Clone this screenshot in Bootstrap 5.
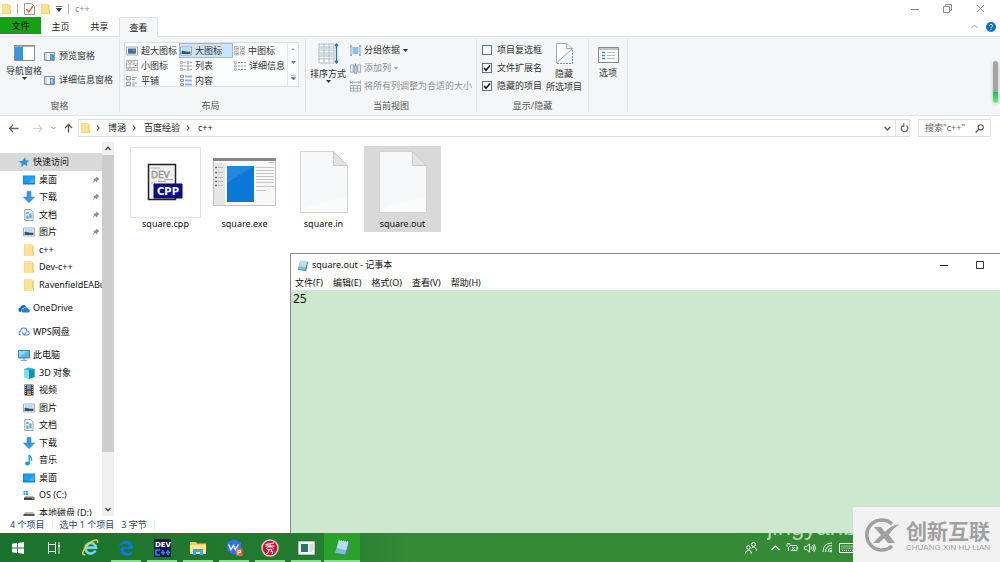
<!DOCTYPE html>
<html lang="zh-CN">
<head>
<meta charset="utf-8">
<meta name="viewport" content="width=device-width, initial-scale=1">
<title>c++</title>
<link href="https://cdn.jsdelivr.net/npm/bootstrap@5.3.0/dist/css/bootstrap.min.css" rel="stylesheet">
<style>
body{font:9px/12px "Noto Sans","Noto Sans CJK SC",sans-serif;color:#222;background:#fff;height:100vh;overflow:hidden}
body>*{flex-shrink:0}
svg{display:block;flex:none}
button{font:inherit;color:inherit;background:none;border:0;padding:0;white-space:nowrap}
a{color:inherit;text-decoration:none}
input,textarea{font:inherit;border-radius:0}
main{flex:1 1 0;min-height:0}
.bar-title{height:17px;padding-left:2px;gap:6px;color:#8a8a8a}
.win-btn{width:33px;height:16px;display:flex;align-items:center;justify-content:center}
.bar-title .win-set{margin-right:3px}
.sep{width:1px;height:10px;background:#aaa}
.tabs{height:20px;border-bottom:1px solid #dfe1e3}
.tab{height:20px;width:39px}
.tab-file{background:#16a016;width:41px;height:17px;color:#000}
.tab-on{background:#f5f6f7;border:1px solid #dfe1e3;border-bottom:0}
.ribbon{background:#f5f6f7;height:79px;border-bottom:1px solid #dfe1e3;color:#333}
.grp{border-right:1px solid #e2e4e6;margin:2px 0;height:73px}
.grp-body{height:61px}
.grp-name{text-align:center;color:#555}
.g1{width:120px}.g2{width:186px;padding-left:4px}.g3{width:171px}.g4{width:112px}.g5{width:39px}
.g2 .grp-body{padding-top:3px}
.g2 .grp-name{padding-right:8px}
.big{display:flex;flex-direction:column;align-items:center;line-height:13px}
.big svg{margin-bottom:3px}
.big .tri{margin:0}
.g1 .big{margin-left:6px;padding-top:6px}
.panes{padding:8px 0 0 2px;gap:6px}
.panes button{height:18px}
.gallery{width:175px;height:45px;border:1px solid #dcdfe3;background:#fbfcfe}
.gal-grid{display:grid;grid-template-columns:repeat(3,54px);grid-auto-rows:15px;flex:1;overflow:hidden}
.gal-grid button{display:flex;align-items:center;gap:3px;padding-left:1px}
.gal-grid button.picked{background:#cce4fb;box-shadow:inset 0 0 0 1px #8dbdec}
.gal-bar{width:11px;border-left:1px solid #e4e6e9}
.rows{display:flex;flex-direction:column;padding-top:2px}
.rows>*{height:18px;display:flex;align-items:center;gap:3px}
.ticks{padding-left:5px;white-space:nowrap}
.ticks>label{gap:5px}
.dim{color:#8e9196}
.tick{appearance:none;width:10px;height:10px;border:1px solid #5c6f94;background:#fff;margin:0}
.tick:checked{background:#fff url("data:image/svg+xml,%3Csvg xmlns='http://www.w3.org/2000/svg' viewBox='0 0 8 8'%3E%3Cpath d='M1 4l2 2.3L7 1.4' fill='none' stroke='%23111' stroke-width='1.6'/%3E%3C/svg%3E") center/8px no-repeat}
.address{height:26px;padding:3px 9px 5px 8px}
.nav-set{width:70px}
.box{border:1px solid #dedede;height:18px;background:#fff}
.path-box{padding-left:2px}
.path-box>.home{margin-right:6px}
.path-box a{margin:0 6px 0 8px}
.search{width:73px}
.search input{border:0;width:50px;padding:0;margin-left:6px;color:#666;outline:0}
.search input::placeholder{color:#666;opacity:1}
.tree{width:102px;padding-top:11px;overflow:hidden}
.tree ul{list-style:none;margin:0 0 6px;padding:0}
.tree li{height:18px;display:flex;align-items:center;padding-left:23px;white-space:nowrap;color:#111}
.tree li:nth-child(even),.tree .short li{height:17px}
.tree li a{display:flex;align-items:center;gap:4px}
.tree li.root{padding-left:18px}
.tree li.root a{gap:3px}
.tree li .pin{margin-left:auto;margin-right:2px}
.tree li.here{background:#d9d9d9}
.scroll{width:12px;background:#f0f0f0}
.thumb{height:297px;background:#cdcdcd}
.files{padding:4px 0 0 13px;gap:2px}
.file{width:77px;height:86px;display:flex;flex-direction:column;align-items:center;color:#111}
.file .pic{height:72px;display:flex;align-items:center;justify-content:center}
.file.chosen{background:#d9d9d9}
.status{height:17px;color:#2c4468;padding-left:10px}
.status span+span{margin-left:7px}
.status .sep{background:#e8e8e8}
.notepad{position:absolute;left:290px;right:0;top:253px;bottom:29px;border:1px solid #8a8a8a;border-width:1px 0 0 1px;background:#fff;color:#111}
.np-title{height:22px;padding-left:6px;gap:3px}
.np-menu{height:14px;padding-left:4px;gap:10px}
.notepad textarea{background:#cce8cf;border:0;resize:none;outline:0;padding:1px 2px;font-size:12px;line-height:15px;color:#111}
.taskbar{height:29px;background:linear-gradient(90deg,#1b722c,#237a30 30%,#368a37 42%,#358b35);position:relative;overflow:hidden}
.app{width:36px;height:29px;display:flex;align-items:center;justify-content:center;position:relative}
.app.open::after{content:"";position:absolute;left:3px;right:3px;bottom:0;height:2px;background:#84e08a}
.app.front{background:#28a228}
.app.front::after{left:0;right:0}
.tray{margin-right:147px;gap:6px}
.faint{position:absolute;right:145px;top:-20px;font:24px/28px "Liberation Sans",sans-serif;color:#ffffffa6;width:88px;overflow:hidden;white-space:nowrap}
.stamp{position:absolute;right:0;bottom:0;width:147px;height:55px;background:#f2f2f2;color:#a0a0a0;padding-left:11px;gap:5px}
.stamp b{font:700 21px/26px "Noto Sans CJK SC",sans-serif;display:block}
.stamp small{font:8px/10px "Liberation Sans",sans-serif;display:block;white-space:nowrap}
.gauge{position:absolute;right:2px;top:61px;width:5px;height:42px;border-radius:3px;background:linear-gradient(#a5a5a5 74%,#22bd57 75%,#77ee78);box-shadow:0 1px 4px #0003}
</style>
<script src="https://cdn.jsdelivr.net/npm/bootstrap@5.3.0/dist/js/bootstrap.bundle.min.js"></script>
</head>
<body class="d-flex flex-column">
<svg width="0" height="0" class="position-absolute" aria-hidden="true">
<symbol id="folder" viewBox="0 0 10 12"><path d="M0 .5h7.500l.5 1H9.500V8.500h.5V11.500H0z" fill="#efc55e"/><path d="M.3.8H8.300v8.200H9V11H.3z" fill="#ffe392"/></symbol>
<symbol id="tri" viewBox="0 0 5 3"><path d="M0 0h5L2.500 3z" fill="currentColor"/></symbol>
<symbol id="chev" viewBox="0 0 4 6"><path d="M.8.6L3.200 3 .8 5.400" fill="none" stroke="#555" stroke-width="1.100"/></symbol>
<symbol id="desk" viewBox="0 0 12 10"><path d="M0 .5h12v9H0z" fill="#0c83dc"/><path d="M.7 1.200h10.600v6.500H.7z" fill="#1d9cf3"/><path d="M5 7.700L11.300 2v5.700z" fill="#42b0f8"/></symbol>
<symbol id="down" viewBox="0 0 12 12"><path d="M4 .5h4V6h3.600L6 11.700.4 6H4z" fill="#3a97e8" stroke="#1f7dcc" stroke-width=".5"/></symbol>
<symbol id="doc" viewBox="0 0 12 12"><path d="M1.800.5h6L10 2.800v8.700H1.800z" fill="#f4f9fc" stroke="#7f8c96" stroke-width=".8"/><path d="M3.200 3h2.500v2H3.200zM6.200 4.500h2.500v5H6.200zM3.200 6.500h2.400v3.300H3.200z" fill="#5fb0e2"/></symbol>
<symbol id="photo" viewBox="0 0 12 10"><path d="M.5 1h11v8H.5z" fill="#fff" stroke="#8f989f" stroke-width=".8"/><path d="M1.600 2h8.800v6H1.600z" fill="#b9def5"/><path d="M1.600 5c2-1.300 4 1.700 8.800.5V8H1.600z" fill="#33566b"/></symbol>
<symbol id="pin" viewBox="0 0 8 8"><path d="M4.600.4l3 3-1 .2-1.300 1.500-.2 1.600-1-.9-1-1L.3 7.700 2.200 4 1 2.900l1.800-.2L4.400 1.400z" fill="#84929e"/></symbol>
<symbol id="minus" viewBox="0 0 8 8"><path d="M0 4.500h8" stroke="currentColor"/></symbol>
<symbol id="sheet" viewBox="0 0 48 62"><path d="M.5.500h33l14 14v47H.5z" fill="#f7f8f9" stroke="#d2d3d5"/><path d="M33.500.500v14h14z" fill="#e2e2e2" stroke="#c9c9c9"/><path d="M1 58L47 45v16H1z" fill="#fafbfb"/></symbol>
<symbol id="pad" viewBox="0 0 16 16"><path d="M4.500 1.500L15 3l-3 12.500L1 13.500z" fill="#4b8499"/><path d="M4.500 1.500L13.500 3 10.500 14.500 1 13z" fill="#7dbdd2"/><path d="M4.500 1.500L13.500 3 11.500 10.500 2.500 8.500z" fill="#b3e0ec"/><path d="M4.500 1.200l9.500 1.500" stroke="#f2f8f9" stroke-dasharray="1 1"/></symbol>
</svg>

<header class="bar-title d-flex align-items-center">
<svg width="9" height="12"><use href="#folder"/></svg><span class="sep"></span>
<svg width="11" height="12" viewBox="0 0 11 12"><path d="M.5.500h7l3 3v8H.5z" fill="#fafafa" stroke="#999"/><path d="M2.500 6l2.300 3L9 3" fill="none" stroke="#e56f38" stroke-width="1.500"/></svg>
<svg width="9" height="12"><use href="#folder"/></svg>
<svg class="text-dark" width="6" height="6" viewBox="0 0 6 6"><path d="M0 .5h6M.5 2.500h5L3 5.500z" fill="currentColor" stroke="currentColor" stroke-width=".7"/></svg>
<span class="sep"></span><span>c++</span>
<div class="win-set ms-auto d-flex">
<button class="win-btn" aria-label="最小化"><svg width="8" height="8"><use href="#minus"/></svg></button>
<button class="win-btn" aria-label="还原"><svg width="9" height="9" viewBox="0 0 9 9" fill="none" stroke="currentColor"><path d="M.5 2.500h6v6h-6zM2.500 2.500v-2h6v6h-2"/></svg></button>
<button class="win-btn" aria-label="关闭"><svg width="9" height="9" viewBox="0 0 9 9" stroke="currentColor"><path d="M1 1l7 7M8 1L1 8"/></svg></button>
</div>
</header>

<nav class="tabs d-flex">
<button class="tab tab-file">文件</button><button class="tab">主页</button><button class="tab">共享</button><button class="tab tab-on">查看</button>
<div class="ms-auto d-flex align-items-center gap-2 pe-1"><svg width="7" height="5" viewBox="0 0 7 5"><path d="M.5 4l3-3 3 3" fill="none" stroke="#999"/></svg>
<button aria-label="帮助"><svg width="10" height="10" viewBox="0 0 10 10"><circle cx="5" cy="5" r="5" fill="#0b70cc"/><path d="M3.400 3.700C3.500 1.800 6.600 1.900 6.600 3.700 6.600 4.700 5 4.800 5 6.200M5 7.200v1.100" stroke="#fff" fill="none"/></svg></button></div>
</nav>

<section class="ribbon d-flex">
<div class="grp g1"><div class="grp-body d-flex">
<button class="big align-self-start"><svg width="21" height="16" viewBox="0 0 21 16"><path d="M.5.500h20v15H.5z" fill="#fff" stroke="#8b8f93"/><path d="M1 2h8v13H1z" fill="#3597e3"/><path d="M1 1h19v1H1z" fill="#a8acb0"/></svg>导航窗格<svg class="tri" width="5" height="3"><use href="#tri"/></svg></button>
<div class="panes d-flex flex-column">
<button class="d-flex align-items-center"><svg class="me-1" width="11" height="9" viewBox="0 0 11 9"><path d="M.5.500h10v8H.5z" fill="#fff" stroke="#8b8f93"/><path d="M6 2h4v6H6z" fill="#3fa2ea"/><path d="M2 1v7" stroke="#aaa"/></svg>预览窗格</button>
<button class="d-flex align-items-center"><svg class="me-1" width="11" height="9" viewBox="0 0 11 9"><path d="M.5.500h10v8H.5z" fill="#fff" stroke="#8b8f93"/><path d="M6 2h4v6H6z" fill="#3fa2ea"/><path d="M7 4h2M7 6h2" stroke="#fff"/><path d="M2 1v7" stroke="#aaa"/></svg>详细信息窗格</button>
</div></div><div class="grp-name">窗格</div></div>

<div class="grp g2"><div class="grp-body"><div class="gallery d-flex"><div class="gal-grid">
<button><svg width="12" height="10" viewBox="0 0 12 10"><path d="M.5 1h11v8H.5z" fill="#fff" stroke="#8f989f" stroke-width=".8"/><path d="M2 2.500h8V7.500H2z" fill="#3a6fd0"/><path d="M2 7.500l3-2.500 5 2.500z" fill="#2c8a4a"/><path d="M6.500 3.500h2.500v2H6.500z" fill="#e0524a"/></svg>超大图标</button>
<button class="picked"><svg width="12" height="10"><use href="#photo"/></svg>大图标</button>
<button><svg width="11" height="10" viewBox="0 0 11 10" fill="#fff" stroke="#999" stroke-width=".6"><path d="M.5.500h4v3.500h-4zM6.500.500h4v3.500h-4zM.5 5.500h4V9h-4zM6.500 5.500h4V9h-4z"/><path d="M2 2h1.500v1H2z" stroke="#d44"/><path d="M8 2h1.500v1H8zM2 7h1.500v1H2z" stroke="#276"/><path d="M8 7h1.500v1H8z" stroke="#d44"/></svg>中图标</button>
<button><svg width="12" height="11" viewBox="0 0 12 11"><path d="M.5.500h11v10H.5zM4 .5v10M8 .5v10M.5 4h11M.5 7.500h11" fill="#fff" stroke="#999" stroke-width=".7"/><path d="M1.500 2h1.500M9 5.500h1.500M5 9h1.500" stroke="#d53"/><path d="M5 2h1.500M1.500 9H3" stroke="#38c"/></svg>小图标</button>
<button><svg width="12" height="10" viewBox="0 0 12 10"><path d="M.5.500h2v2h-2zM.5 4h2v2h-2zM.5 7.500h2v2h-2zM7 .5h2v2H7zM7 4h2v2H7zM7 7.500h2v2H7z" fill="#fff" stroke="#999" stroke-width=".7"/><path d="M3.500 1.500h2M3.500 5h2M3.500 8.500h2M10 1.500h2M10 5h2M10 8.500h2" stroke="#999"/></svg>列表</button>
<button><svg width="12" height="10" viewBox="0 0 12 10"><path d="M.5.500h2v2h-2zM.5 4h2v2h-2zM.5 7.500h2v2h-2z" fill="#fff" stroke="#999" stroke-width=".7"/><path d="M4 1.500h8M4 5h8M4 8.500h8" stroke="#999" stroke-dasharray="2 1"/></svg>详细信息</button>
<button><svg width="12" height="10" viewBox="0 0 12 10"><path d="M.5.500h4v3.500h-4zM.5 6h4v3.500h-4z" fill="#cbe9d7" stroke="#888" stroke-width=".8"/><path d="M6 1.500h5M6 3.500h3M6 7h5M6 9h3" stroke="#999"/></svg>平铺</button>
<button><svg width="12" height="11" viewBox="0 0 12 11"><path d="M.5.500h3v2h-3zM.5 4.500h3v2h-3zM.5 8.500h3v2h-3z" fill="#fff" stroke="#777" stroke-width=".8"/><path d="M5 1.500h7M5 5.500h7M5 9.500h7" stroke="#8ab7e8" stroke-width="2"/></svg>内容</button>
</div><div class="gal-bar d-flex flex-column justify-content-around align-items-center text-secondary"><svg width="4" height="2" viewBox="0 0 4 2"><path d="M0 2l2-2 2 2z" fill="#aaa"/></svg><svg width="5" height="3"><use href="#tri"/></svg><svg width="5" height="6" viewBox="0 0 5 6"><path d="M0 .5h5M0 2.500h5L2.500 5z" fill="currentColor" stroke="currentColor" stroke-width=".5"/></svg></div></div></div><div class="grp-name">布局</div></div>

<div class="grp g3"><div class="grp-body d-flex">
<button class="big ms-1 pt-1 align-self-start"><svg width="21" height="21" viewBox="0 0 21 21"><path d="M1 1h15v19H1zM1 4h15M1 7h15M1 10h15M1 13h15M1 16h15M6 1v19M11 1v19" fill="#fff" stroke="#b3bac1"/><path d="M2 5.500h13M2 11.500h13" stroke="#c3dff3"/><path d="M18.500 1v19M17 3l1.500-2L20 3M17 18l1.500 2L20 18" stroke="#1979c3" fill="none" stroke-width="1.300"/></svg>排序方式<svg class="tri" width="5" height="3"><use href="#tri"/></svg></button>
<div class="rows ms-1">
<button><svg width="11" height="11" viewBox="0 0 11 11"><path d="M1 0v11M10 0v11M0 1h2M0 10h2M9 1h2M9 10h2" stroke="#8e989f"/><path d="M2.500 2h6v7h-6z" fill="#82c5f3"/></svg>分组依据<svg width="5" height="3"><use href="#tri"/></svg></button>
<button class="dim"><svg width="11" height="11" viewBox="0 0 12 11"><path d="M.5 1.500h3v8h-3zM8.500 1.500h3v8h-3z" fill="#eef1f5" stroke="#9da9b8"/><path d="M4.500 3h3v7.500h-3zM6 0v3" fill="#cbd5e3" stroke="#8191ab"/></svg>添加列<svg width="4" height="3"><use href="#tri"/></svg></button>
<button class="dim"><svg width="11" height="12" viewBox="0 0 12 12"><path d="M.5 0v4M11.500 0v4M1 2h10M3 .6L1.500 2 3 3.400M9 .6L10.500 2 9 3.400M.5 5.500h11v6H.5zM4 5.500v6M8 5.500v6M.5 8.500h11" fill="none" stroke="#98a4b3"/></svg>将所有列调整为合适的大小</button>
</div></div><div class="grp-name">当前视图</div></div>

<div class="grp g4"><div class="grp-body d-flex">
<div class="rows ticks">
<label><input class="tick" type="checkbox">项目复选框</label>
<label><input class="tick" type="checkbox" checked>文件扩展名</label>
<label><input class="tick" type="checkbox" checked>隐藏的项目</label></div>
<button class="big ms-1 pt-1 align-self-start"><svg width="17" height="21" viewBox="0 0 17 21"><path d="M.5 20V.500h10l6 5L.5 20" fill="#fff" stroke="#a3a6aa"/><path d="M10.500.500v5h6" fill="#eee" stroke="#a3a6aa"/><path d="M16.500 7v13.500H1" fill="none" stroke="#4b9ad4" stroke-dasharray="2 1"/></svg>隐藏<br>所选项目</button>
</div><div class="grp-name">显示/隐藏</div></div>
<div class="grp g5"><button class="big w-100 pt-2"><svg width="21" height="16" viewBox="0 0 21 16"><path d="M.5.500h20v15H.5z" fill="#fff" stroke="#85898d"/><path d="M1 1h19v2H1z" fill="#bfc3c7"/><path d="M4 5.500h3M4 8.500h3M4 11.500h3" stroke="#3190dc" stroke-width="1.500"/><path d="M9 5.500h8M9 8.500h8M9 11.500h8" stroke="#b9bec3"/></svg>选项</button></div>
</section>

<section class="address d-flex align-items-center">
<div class="nav-set d-flex align-items-center">
<button aria-label="后退"><svg width="12" height="9" viewBox="0 0 12 9"><path d="M10.500 4.500h-9M5 1L1.500 4.500 5 8" fill="none" stroke="#666" stroke-width="1.300"/></svg></button>
<button class="ms-2 ps-1" aria-label="前进"><svg width="11" height="9" viewBox="0 0 11 9"><path d="M1 4.500h9M6.500 1L10 4.500 6.500 8" fill="none" stroke="#d0d0d0" stroke-width="1.200"/></svg></button>
<button class="ms-2" aria-label="最近"><svg width="5" height="4" viewBox="0 0 5 4"><path d="M.5 1l2 2 2-2" fill="none" stroke="#888"/></svg></button>
<button class="ms-2" aria-label="向上"><svg width="9" height="10" viewBox="0 0 9 10"><path d="M4.500 9.500V1.500M1 5l3.500-3.500L8 5" fill="none" stroke="#555" stroke-width="1.300"/></svg></button></div>
<div class="box path-box flex-grow-1 d-flex align-items-center">
<svg class="home" width="9" height="12"><use href="#folder"/></svg><svg width="4" height="6"><use href="#chev"/></svg><a href="#">博涵</a><svg width="4" height="6"><use href="#chev"/></svg><a href="#">百度经验</a><svg width="4" height="6"><use href="#chev"/></svg><a href="#">c++</a>
<button class="ms-auto me-1" aria-label="展开"><svg width="7" height="5" viewBox="0 0 7 5"><path d="M.7 1l2.800 3L6.300 1" fill="none" stroke="#555" stroke-width="1.300"/></svg></button>
<button class="border-start h-100 ps-1" aria-label="刷新"><svg width="9" height="10" viewBox="0 0 9 10"><path d="M2.700 2.500A3.300 3.300 0 1 0 6.500 2.600M3.800.3v3H.8" fill="none" stroke="#666" stroke-width="1.200"/></svg></button></div>
<div class="box search d-flex align-items-center ms-2"><input type="text" placeholder='搜索"c++"' aria-label="搜索"><svg width="9" height="9" viewBox="0 0 9 9"><circle cx="5.700" cy="3.300" r="2.600" fill="none" stroke="#555" stroke-width="1.100"/><path d="M3.800 5.200L.6 8.400" stroke="#555" stroke-width="1.400"/></svg></div>
</section>

<main class="d-flex overflow-hidden">
<nav class="tree">
<ul>
<li class="root here"><a href="#"><svg width="12" height="11" viewBox="0 0 12 11"><path d="M7 .3l.8 3 3.500.2-2.800 2.200 1 3.800-3.200-1.900L3 10.300l.8-3.600L.5 4.200l3.700-.3z" fill="#2e93dc"/></svg>快速访问</a></li>
<li><a href="#"><svg width="12" height="10"><use href="#desk"/></svg>桌面</a><svg class="pin" width="8" height="8"><use href="#pin"/></svg></li>
<li><a href="#"><svg width="12" height="12"><use href="#down"/></svg>下载</a><svg class="pin" width="8" height="8"><use href="#pin"/></svg></li>
<li><a href="#"><svg width="12" height="12"><use href="#doc"/></svg>文档</a><svg class="pin" width="8" height="8"><use href="#pin"/></svg></li>
<li><a href="#"><svg width="12" height="10"><use href="#photo"/></svg>图片</a><svg class="pin" width="8" height="8"><use href="#pin"/></svg></li>
<li><a href="#"><svg width="12" height="12"><use href="#folder"/></svg>c++</a></li>
<li><a href="#"><svg width="12" height="12"><use href="#folder"/></svg>Dev-c++</a></li>
<li><a href="#"><svg width="12" height="12"><use href="#folder"/></svg>RavenfieldEABuild</a></li>
</ul>
<ul><li class="root"><a href="#"><svg width="12" height="9" viewBox="0 0 12 9"><path d="M1 7.500C-.5 5 1.500 3.500 2.500 3.500 3.500.500 7 .500 8 2.500L4 4.500 3 8z" fill="#0a64b7"/><path d="M4.500 8.500C2.500 6.500 4 4.800 5.300 4.900 6.500 2.500 9.500 3 10 5c2 0 2.500 3 .5 3.500z" fill="#1586d8"/></svg>OneDrive</a></li></ul>
<ul class="short"><li class="root"><a href="#"><svg width="12" height="9" viewBox="0 0 12 9"><path d="M3 8C.2 8 .2 4.500 2.700 4.300 2.500.200 8.500-.2 9 4c3 .3 2.800 4 .3 4H6L4 5.500M6 8l2.500-3" fill="none" stroke="#4b83f0" stroke-width="1.100"/></svg>WPS网盘</a></li></ul>
<ul>
<li class="root"><a href="#"><svg width="12" height="11" viewBox="0 0 12 11"><path d="M.5.500h11v7.500H.5z" fill="#55b5ef" stroke="#3c85ae"/><path d="M1 7L10 1H1z" fill="#96d8f9"/><path d="M3 10.300h6M6 8v2" stroke="#7995a3"/></svg>此电脑</a></li>
<li><a href="#"><svg width="12" height="12" viewBox="0 0 12 12"><path d="M1 2l5-1.500L11.500 2v8L6 11.700 1 10z" fill="#30b6cf"/><path d="M1 2l5 1.500v8L1 10z" fill="#7de0ea"/><path d="M6 3.500L11.500 2v8L6 11.700z" fill="#0e94b3"/></svg>3D 对象</a></li>
<li><a href="#"><svg width="12" height="12" viewBox="0 0 12 12"><path d="M1.500.500h9v11h-9z" fill="#37373b"/><path d="M4 1h4v4.500H4z" fill="#649bdf"/><path d="M4 6.500h4V11H4z" fill="#bd8b4b"/><path d="M2.700 1v10M9.300 1v10" stroke="#ddd" stroke-dasharray="1 1"/></svg>视频</a></li>
<li><a href="#"><svg width="12" height="10"><use href="#photo"/></svg>图片</a></li>
<li><a href="#"><svg width="12" height="12"><use href="#doc"/></svg>文档</a></li>
<li><a href="#"><svg width="12" height="12"><use href="#down"/></svg>下载</a></li>
<li><a href="#"><svg width="12" height="12" viewBox="0 0 12 12"><ellipse cx="4.500" cy="9.500" rx="2.400" ry="1.900" fill="#199af0"/><path d="M6.200 9.500V.800c.4 2 3.800 2.500 2.300 6" fill="none" stroke="#199af0" stroke-width="1.400"/></svg>音乐</a></li>
<li><a href="#"><svg width="12" height="10"><use href="#desk"/></svg>桌面</a></li>
<li><a href="#"><svg width="12" height="11" viewBox="0 0 12 11"><path d="M.5 1h2v1.800h-2zM3 1h2v1.800H3zM.5 3.300h2v1.800h-2zM3 3.300h2v1.800H3z" fill="#18a9e9"/><path d="M2 6h8l1.500 2H1z" fill="#bbb"/><path d="M1 7.500h10.500V10H1z" fill="#444"/><path d="M9 8.800h1.500" stroke="#5e5"/></svg>OS (C:)</a></li>
<li><a href="#"><svg width="12" height="11" viewBox="0 0 12 11"><path d="M2 5h8l1.500 2H.5z" fill="#bbb"/><path d="M.5 7h11v2.500H.5z" fill="#555"/></svg>本地磁盘 (D:)</a></li>
</ul>
</nav>
<div class="scroll d-flex flex-column align-items-center">
<svg class="my-1" width="6" height="5" viewBox="0 0 6 5"><path d="M.5 4L3 1.300 5.500 4" fill="none" stroke="#444" stroke-width="1.300"/></svg><div class="thumb w-100"></div>
<svg class="mt-auto mb-1" width="6" height="5" viewBox="0 0 6 5"><path d="M.5 1L3 3.700 5.500 1" fill="none" stroke="#444" stroke-width="1.300"/></svg></div>
<section class="files d-flex align-items-start">
<a class="file" href="#"><span class="pic"><svg width="71" height="71" viewBox="0 0 71 71"><path d="M.5.500h70v70H.5z" fill="#fff" stroke="#e2e2e2"/><path d="M18.500 17.500h27v35h-27z" fill="#f1f1f1" stroke="#222" stroke-width="1.500"/><path d="M21 21h9M28 34.500h8M34 32.500h9M21 36h4" stroke="#aaa"/><text x="21" y="30.500" font-family="DejaVu Sans" font-size="9" fill="#ddd" stroke="#888" stroke-width=".5">DEV</text><path d="M24 37h28v14H24z" fill="#0a0a9c" stroke="#112" stroke-width="1"/><text x="27" y="48" font-family="DejaVu Sans" font-weight="700" font-size="10" fill="#fff">CPP</text></svg></span>square.cpp</a>
<a class="file" href="#"><span class="pic"><svg width="63" height="48" viewBox="0 0 63 48"><path d="M.5.500h62v47H.5z" fill="#f8f8f8" stroke="#bfc1c3"/><path d="M0 0h63v3H0z" fill="#84898e"/><path d="M1 5h11v42H1z" fill="#e5e6e7"/><path d="M2 9.500h2M2 14.500h2M2 19.500h2M2 23.500h2M2 27.500h2" stroke="#777" stroke-width="1.500"/><path d="M5 9.500h5M5 14.500h5M5 19.500h5M5 23.500h5M5 27.500h5" stroke="#bbb"/><path d="M14 8h27v36H14z" fill="#0a78d4"/><path d="M14 8h27L14 25z" fill="#2288dc"/><path d="M43 9.500h18M43 12.500h18M43 15.500h18M43 18.500h18M43 21.500h18M43 24.500h18M43 28.500h18M43 32.500h10M55 4.500h6" stroke="#c4c4c4"/></svg></span>square.exe</a>
<a class="file" href="#"><span class="pic"><svg width="48" height="62"><use href="#sheet"/></svg></span>square.in</a>
<a class="file chosen" href="#"><span class="pic"><svg width="48" height="62"><use href="#sheet"/></svg></span>square.out</a>
</section>
</main>
<footer class="status d-flex align-items-center"><span>4 个项目</span><span class="sep"></span><span>选中 1 个项目</span><span>3 字节</span><span class="sep"></span></footer>

<footer class="taskbar d-flex">
<button class="app" aria-label="开始"><svg width="12" height="12" viewBox="0 0 12 12" fill="#fff"><path d="M0 1.800L5.200 1v4.600H0zM6 .900L12 0v5.600H6zM0 6.400h5.200V11L0 10.200zM6 6.400h6V12l-6-.9z"/></svg></button>
<button class="app" aria-label="任务视图"><svg width="13" height="12" viewBox="0 0 13 12" fill="none" stroke="#e5efe5"><path d="M.5 0v2.500h7V0M.5 12V9.500h7V12M.5 2.500v7M7.500 2.500v7M11 0v12"/><path d="M10 3h2v2h-2z" fill="#fff" stroke="none"/></svg></button>
<button class="app" aria-label="Internet Explorer"><svg width="17" height="17" viewBox="0 0 17 17"><path d="M13.500 11.500A5.300 5.300 0 1 1 14 8.700H4" fill="none" stroke="#71d5f6" stroke-width="2.700"/><path d="M3.200 15.500C-2 17 2 8 9 3.200 12.500.700 16.500-.300 15.500 4" fill="none" stroke="#f6ce37" stroke-width="1.500"/></svg></button>
<button class="app open" aria-label="Edge"><svg width="16" height="16" viewBox="0 0 16 16"><path d="M1 7C2-.5 14-2 15 7v2H5.500c0 4 5 4.500 8.500 2.500v3C7 18 1.500 14 2.500 9c.5-2 2-3.500 4-4C5.500 5.800 5.300 6.500 5.300 7h5.200c0-4.500-6.500-4-9.500 0z" fill="#0c78d3"/></svg></button>
<button class="app open" aria-label="Dev-C++"><svg width="17" height="18" viewBox="0 0 17 18"><path d="M0 0h17v18H0z" fill="#10194c"/><text x="1" y="8" font-family="DejaVu Sans" font-weight="700" font-size="7" fill="#fff">DEV</text><path d="M6 11H2v5h4M9 11v5M7 13.500h4M14 11v5M12 13.500h4" fill="none" stroke="#298ceb" stroke-width="1.600"/></svg></button>
<button class="app open" aria-label="文件资源管理器"><svg width="16" height="14" viewBox="0 0 16 14"><path d="M0 1h6l1 1.500h9V13H0z" fill="#f4cd62"/><path d="M0 4h16v9H0z" fill="#ffe596"/><path d="M3 14V8h10v6h-3v-3H6v3z" fill="#39a8e4"/></svg></button>
<button class="app open" aria-label="WPS"><svg width="17" height="17" viewBox="0 0 17 17"><path d="M8 0l7 3.500v8L8 16l-7-4.500v-8z" fill="#2d72ee"/><path d="M2.500 5.500l2.500 5 2.500-4 2 4 3-5" fill="none" stroke="#fff" stroke-width="1.400"/><path d="M10 9.500h6.500V17H10z" fill="#f0653e"/><path d="M12 15.500v-4h2.500v2H12" fill="none" stroke="#fff"/></svg></button>
<button class="app open" aria-label="秀"><svg width="18" height="18" viewBox="0 0 18 18"><circle cx="9" cy="9" r="8" fill="#cf1534" stroke="#e9c7c9" stroke-width="1.500"/><path d="M4.500 5.500L13 4M9 4v5M4.500 7h9M8 7.500L5 10M10 7.500l3 2.500M6 10.500h5L10 12.500h2L11 15M8 10.500C8 13 7 14 5 15" fill="none" stroke="#fff"/></svg></button>
<button class="app open" aria-label="控制台"><svg width="17" height="14" viewBox="0 0 17 14"><path d="M.5.500h16v13H.5z" fill="#f7f7f7" stroke="#b9c1bd"/><path d="M3 3h7v8H3z" fill="#267a68"/><path d="M11.500 4h4M11.500 6h4M11.500 8h4M11.500 10h3" stroke="#bbb"/></svg></button>
<button class="app open front" aria-label="记事本"><svg width="17" height="17"><use href="#pad"/></svg></button>
<div class="faint">jingyanbaidu</div>
<div class="tray d-flex align-items-center ms-auto">
<svg width="12" height="12" viewBox="0 0 12 12" fill="none" stroke="#fff"><circle cx="8.500" cy="2.500" r="2"/><circle cx="3.500" cy="5.500" r="1.800"/><path d="M6.500 6.500C8 4 11 5 11.500 8.500M.5 11.500C1 7 6 7 6.500 11.500"/></svg>
<svg class="ms-2" width="9" height="6" viewBox="0 0 9 6"><path d="M.5 5l4-4 4 4" fill="none" stroke="#fff" stroke-width="1.100"/></svg>
<svg width="12" height="9" viewBox="0 0 12 9" fill="none" stroke="#fff" stroke-width=".8"><path d="M4 2.500h7v5H4.500M11.500 4v2M1 .5h3V3L2.500 4.500 1 3zM2.500 4.500V8M6 4l3 2.500M9 4L6 6.500"/></svg>
<svg width="12" height="10" viewBox="0 0 12 10" fill="none" stroke="#fff" stroke-width=".9"><path d="M.5 3.500h2L5.500 1v8L2.500 6.500h-2zM7 3.500q1 1.500 0 3M8.500 2q2.500 3 0 6M10 1q3 4 0 8"/></svg>
<svg width="11" height="11" viewBox="0 0 11 11" fill="none" stroke="#fff" stroke-width=".9"><path d="M1 10Q1 1 10 1M3.500 10Q3.500 3.500 10 3.500M6 10q0-4 4-4"/><circle cx="8.800" cy="9" r=".8" fill="#fff"/></svg>
<svg width="14" height="10" viewBox="0 0 14 10" fill="none" stroke="#fff"><path d="M14 .5H.5v9H14"/><path d="M2.500 3H14M2.500 5H14M3 7.300h11" stroke-dasharray="1 1"/></svg>
</div>
</footer>

<section class="notepad d-flex flex-column">
<div class="np-title d-flex align-items-center"><svg width="12" height="13"><use href="#pad"/></svg><span>square.out - 记事本</span>
<button class="win-btn ms-auto" aria-label="最小化"><svg width="8" height="8"><use href="#minus"/></svg></button><button class="win-btn me-1" aria-label="最大化"><svg width="8" height="8" viewBox="0 0 8 8"><path d="M.5.500h7v7h-7z" fill="none" stroke="#333"/></svg></button></div>
<div class="np-menu d-flex align-items-center"><button>文件(F)</button><button>编辑(E)</button><button>格式(O)</button><button>查看(V)</button><button>帮助(H)</button></div>
<textarea class="flex-grow-1 w-100" aria-label="文本" spellcheck="false">25</textarea>
</section>
<div class="gauge"></div>
<aside class="stamp d-flex align-items-center"><svg width="37" height="34" viewBox="0 0 37 34"><path d="M28 6A15 15 0 1 0 28 28" fill="none" stroke="#a0a0a0" stroke-width="3.500"/><path d="M10 9h7l4 5q6-7 15-8-7 4-11 11l6 8h-7l-4-5-5 5h-6l8-8z" fill="#a0a0a0"/></svg><div><b>创新互联</b><small>CHUANG XIN HU LIAN</small></div></aside>
</body>
</html>
